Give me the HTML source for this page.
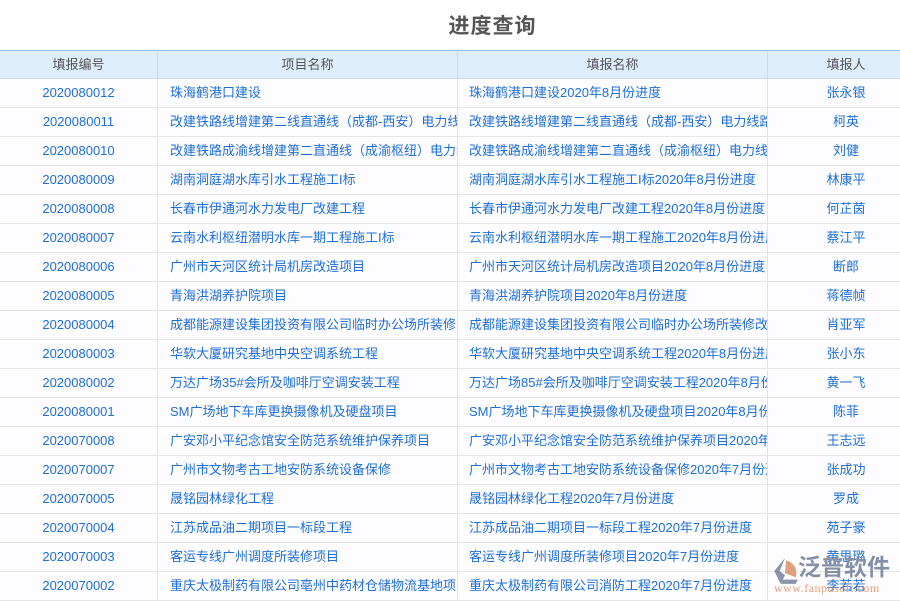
<!DOCTYPE html>
<html><head><meta charset="utf-8"><style>
*{margin:0;padding:0;box-sizing:border-box}
body{width:900px;height:600px;overflow:hidden;background:#fff;font-family:"Liberation Sans","Noto Sans CJK SC",sans-serif;position:relative}
.title{position:absolute;top:10px;left:0;width:985px;text-align:center;font-size:21px;font-weight:bold;color:#555;letter-spacing:1px}
.hdr{position:absolute;top:50px;left:0;width:900px;height:29px;background:#ddedfb;border-top:1px solid #8cc0ec;border-bottom:1px solid #c9dcee}
.row{position:absolute;left:0;width:900px;height:29px;border-bottom:1px solid #e6e6ea;background:#fdfcfe}
.c{position:absolute;top:0;height:100%;line-height:28px;font-size:13px;white-space:nowrap;overflow:hidden;color:#1e6fd6}
.hdr .c{color:#555;line-height:27px}
.c1{left:0;width:157px;text-align:center}
.c2{left:157px;width:300px;padding-left:12px;border-left:1px solid #e2e2e8}
.c3{left:457px;width:310px;padding-left:11px;border-left:1px solid #e2e2e8}
.c4{left:767px;width:133px;text-align:center;padding-left:24px;border-left:1px solid #e2e2e8}
.hdr .c2,.hdr .c3{text-align:center;padding-left:0}
.hdr .c2,.hdr .c3,.hdr .c4{border-left-color:#c9dcee}
.wm{position:absolute;left:768px;top:550px;width:132px;height:50px}
</style></head><body>
<div class="title">进度查询</div>
<div class="hdr"><div class="c c1">填报编号</div><div class="c c2">项目名称</div><div class="c c3">填报名称</div><div class="c c4">填报人</div></div>
<div class="row" style="top:79px"><div class="c c1">2020080012</div><div class="c c2">珠海鹤港口建设</div><div class="c c3">珠海鹤港口建设2020年8月份进度</div><div class="c c4">张永银</div></div>
<div class="row" style="top:108px"><div class="c c1">2020080011</div><div class="c c2">改建铁路线增建第二线直通线（成都-西安）电力线路</div><div class="c c3">改建铁路线增建第二线直通线（成都-西安）电力线路</div><div class="c c4">柯英</div></div>
<div class="row" style="top:137px"><div class="c c1">2020080010</div><div class="c c2">改建铁路成渝线增建第二直通线（成渝枢纽）电力线路</div><div class="c c3">改建铁路成渝线增建第二直通线（成渝枢纽）电力线路</div><div class="c c4">刘健</div></div>
<div class="row" style="top:166px"><div class="c c1">2020080009</div><div class="c c2">湖南洞庭湖水库引水工程施工I标</div><div class="c c3">湖南洞庭湖水库引水工程施工I标2020年8月份进度</div><div class="c c4">林康平</div></div>
<div class="row" style="top:195px"><div class="c c1">2020080008</div><div class="c c2">长春市伊通河水力发电厂改建工程</div><div class="c c3">长春市伊通河水力发电厂改建工程2020年8月份进度</div><div class="c c4">何芷茵</div></div>
<div class="row" style="top:224px"><div class="c c1">2020080007</div><div class="c c2">云南水利枢纽潜明水库一期工程施工I标</div><div class="c c3">云南水利枢纽潜明水库一期工程施工2020年8月份进度</div><div class="c c4">蔡江平</div></div>
<div class="row" style="top:253px"><div class="c c1">2020080006</div><div class="c c2">广州市天河区统计局机房改造项目</div><div class="c c3">广州市天河区统计局机房改造项目2020年8月份进度</div><div class="c c4">断郎</div></div>
<div class="row" style="top:282px"><div class="c c1">2020080005</div><div class="c c2">青海洪湖养护院项目</div><div class="c c3">青海洪湖养护院项目2020年8月份进度</div><div class="c c4">蒋德帧</div></div>
<div class="row" style="top:311px"><div class="c c1">2020080004</div><div class="c c2">成都能源建设集团投资有限公司临时办公场所装修改造</div><div class="c c3">成都能源建设集团投资有限公司临时办公场所装修改造</div><div class="c c4">肖亚军</div></div>
<div class="row" style="top:340px"><div class="c c1">2020080003</div><div class="c c2">华软大厦研究基地中央空调系统工程</div><div class="c c3">华软大厦研究基地中央空调系统工程2020年8月份进度</div><div class="c c4">张小东</div></div>
<div class="row" style="top:369px"><div class="c c1">2020080002</div><div class="c c2">万达广场35#会所及咖啡厅空调安装工程</div><div class="c c3">万达广场85#会所及咖啡厅空调安装工程2020年8月份进度</div><div class="c c4">黄一飞</div></div>
<div class="row" style="top:398px"><div class="c c1">2020080001</div><div class="c c2">SM广场地下车库更换摄像机及硬盘项目</div><div class="c c3">SM广场地下车库更换摄像机及硬盘项目2020年8月份进度</div><div class="c c4">陈菲</div></div>
<div class="row" style="top:427px"><div class="c c1">2020070008</div><div class="c c2">广安邓小平纪念馆安全防范系统维护保养项目</div><div class="c c3">广安邓小平纪念馆安全防范系统维护保养项目2020年7月份</div><div class="c c4">王志远</div></div>
<div class="row" style="top:456px"><div class="c c1">2020070007</div><div class="c c2">广州市文物考古工地安防系统设备保修</div><div class="c c3">广州市文物考古工地安防系统设备保修2020年7月份进度</div><div class="c c4">张成功</div></div>
<div class="row" style="top:485px"><div class="c c1">2020070005</div><div class="c c2">晟铭园林绿化工程</div><div class="c c3">晟铭园林绿化工程2020年7月份进度</div><div class="c c4">罗成</div></div>
<div class="row" style="top:514px"><div class="c c1">2020070004</div><div class="c c2">江苏成品油二期项目一标段工程</div><div class="c c3">江苏成品油二期项目一标段工程2020年7月份进度</div><div class="c c4">苑子豪</div></div>
<div class="row" style="top:543px"><div class="c c1">2020070003</div><div class="c c2">客运专线广州调度所装修项目</div><div class="c c3">客运专线广州调度所装修项目2020年7月份进度</div><div class="c c4">黄思璐</div></div>
<div class="row" style="top:572px"><div class="c c1">2020070002</div><div class="c c2">重庆太极制药有限公司亳州中药材仓储物流基地项目</div><div class="c c3">重庆太极制药有限公司消防工程2020年7月份进度</div><div class="c c4">李若若</div></div>
<div class="wm">
<svg style="position:absolute;left:2px;top:6px" width="30" height="30" viewBox="0 0 28 28"><path d="M14 2 L4 14 L10 26 L14 18 L9 14 Z" fill="#8a93a8"/><path d="M15 4 Q27 8 24 20 L14 16 Z" fill="#e0a07e"/><path d="M12 22 L26 22 L24 26 L10 26Z" fill="#8a93a8"/></svg>
<div style="position:absolute;left:30px;top:3px;font-size:23px;font-weight:bold;color:#8590a6;line-height:28px">泛普软件</div>
<div style="position:absolute;left:6px;top:31px;font-size:12px;color:#e0a07e;font-family:'Liberation Serif',serif;letter-spacing:0.5px">www.fanpusoft.com</div>
</div>
</body></html>
